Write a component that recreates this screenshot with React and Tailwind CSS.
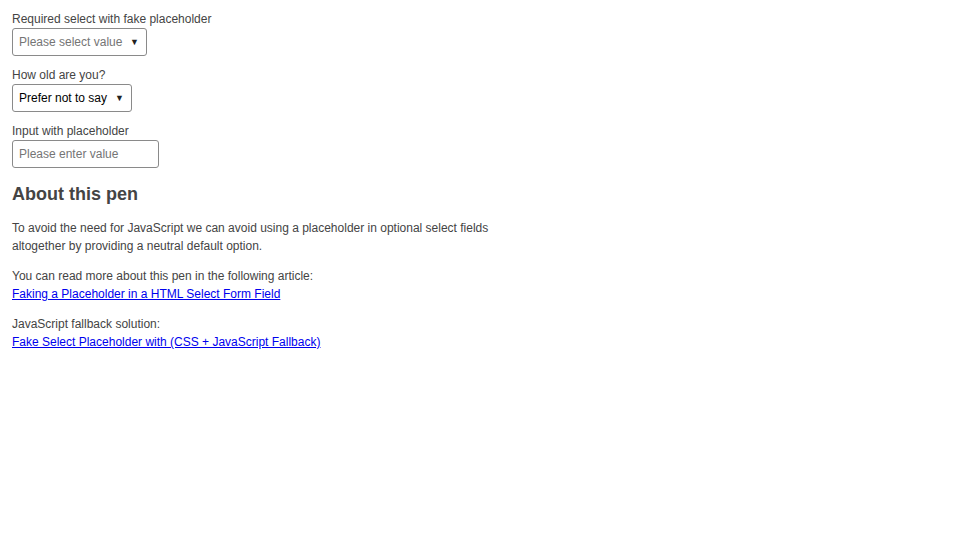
export default function App() {
  return (
    <div className="bg-white min-h-[540px] w-[960px] px-3 pt-[9px] text-[12px] leading-[18px] text-[#444] font-['Liberation_Sans',Arial,Helvetica,sans-serif]">
      <div className="mb-[9px]">
        <div className="h-[19px] pt-[1px]">Required select with fake placeholder</div>
        <div className="flex items-center justify-between w-[135px] h-[28px] border border-[#8a8a8a] rounded-[3px] pl-[6px] pr-[7px] whitespace-nowrap">
          <span className="text-[#757575]">Please select value</span>
          <span className="text-[9px] text-[#222]">▼</span>
        </div>
      </div>
      <div className="mb-[9px]">
        <div className="h-[19px] pt-[1px]">How old are you?</div>
        <div className="flex items-center justify-between w-[120px] h-[28px] border border-[#8a8a8a] rounded-[3px] pl-[6px] pr-[7px] whitespace-nowrap">
          <span className="text-black">Prefer not to say</span>
          <span className="text-[9px] text-[#222]">▼</span>
        </div>
      </div>
      <div>
        <div className="h-[19px] pt-[1px]">Input with placeholder</div>
        <div className="flex items-center w-[147px] h-[28px] border border-[#8a8a8a] rounded-[3px] pl-[6px] whitespace-nowrap">
          <span className="text-[#757575]">Please enter value</span>
        </div>
      </div>
      <h2 className="mt-[15px] text-[18px] leading-[22px] font-bold text-[#444]">About this pen</h2>
      <p className="mt-[14px] max-w-[500px]">To avoid the need for JavaScript we can avoid using a placeholder in optional select fields altogether by providing a neutral default option.</p>
      <p className="mt-[12px]">
        You can read more about this pen in the following article:<br />
        <a className="text-[#0000ee] underline" href="#">Faking a Placeholder in a HTML Select Form Field</a>
      </p>
      <p className="mt-[12px]">
        JavaScript fallback solution:<br />
        <a className="text-[#0000ee] underline" href="#">Fake Select Placeholder with (CSS + JavaScript Fallback)</a>
      </p>
    </div>
  );
}
